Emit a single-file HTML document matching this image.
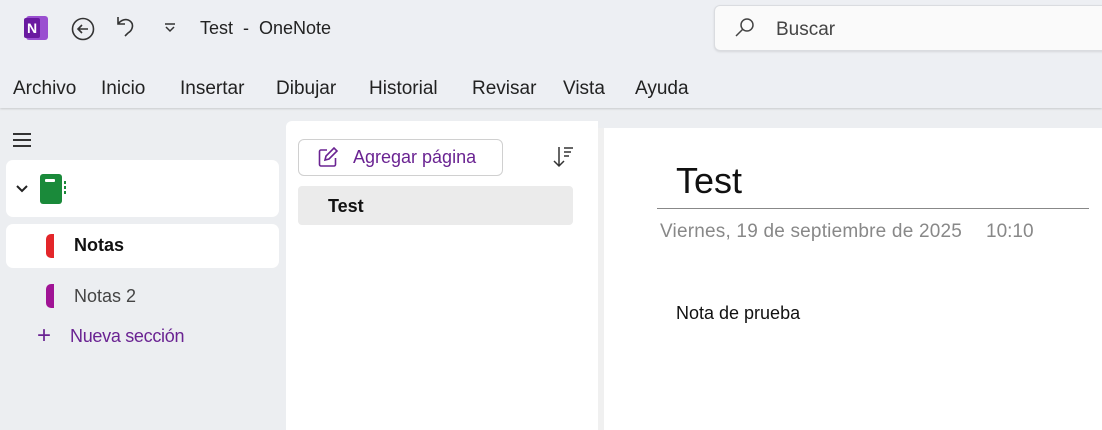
<!DOCTYPE html>
<html><head><meta charset="utf-8"><style>
*{margin:0;padding:0;box-sizing:border-box}
html,body{width:1102px;height:430px;overflow:hidden}
body{background:#eceef1;font-family:"Liberation Sans",sans-serif;position:relative;color:#1f1f1f}
.a{position:absolute}
.menu span{position:absolute;top:78px;font-size:19px;color:#222}
</style></head><body>
<div class="a" style="left:0;top:0;width:1102px;height:108px;background:#edeff3;box-shadow:0 1px 2px rgba(0,0,0,.15)"></div>
<div class="a" style="left:26px;top:16px;width:22px;height:24px;background:#9a4fd0;border-radius:3px"></div>
<div class="a" style="left:24px;top:18px;width:16px;height:20px;background:#6a1aa0;color:#fff;font-weight:bold;font-size:14px;text-align:center;line-height:20px;border-radius:2px">N</div>
<svg class="a" style="left:70px;top:16px" width="26" height="26" viewBox="0 0 26 26"><circle cx="13" cy="13" r="10.5" fill="none" stroke="#333" stroke-width="1.6"/><path d="M18 13H8M12 9l-4 4 4 4" fill="none" stroke="#333" stroke-width="1.6"/></svg>
<svg class="a" style="left:114px;top:14px" width="28" height="28" viewBox="0 0 28 28"><path d="M4 3v7h7M4 10c3-4 8-6 12-3 4 3 3 9-2 12l-3 3" fill="none" stroke="#333" stroke-width="1.6"/></svg>
<svg class="a" style="left:164px;top:22px" width="12" height="12" viewBox="0 0 12 12"><path d="M1 2h10M2 5l4 4 4-4" fill="none" stroke="#333" stroke-width="1.5"/></svg>
<div class="a" style="left:200px;top:18px;font-size:18px;color:#222">Test&nbsp; - &nbsp;OneNote</div>
<div class="a" style="left:714px;top:5px;width:400px;height:46px;background:#fafafa;border:1px solid #dadce0;border-radius:6px;box-shadow:0 1px 2px rgba(0,0,0,.1)"></div>
<svg class="a" style="left:733px;top:16px" width="24" height="24" viewBox="0 0 24 24"><circle cx="14" cy="9" r="6" fill="none" stroke="#444" stroke-width="1.5"/><path d="M10 13l-7 7" stroke="#444" stroke-width="1.5"/></svg>
<div class="a" style="left:776px;top:19px;font-size:19px;color:#444">Buscar</div>
<div class="menu"><span style="left:13px">Archivo</span><span style="left:101px">Inicio</span><span style="left:180px">Insertar</span><span style="left:276px">Dibujar</span><span style="left:369px">Historial</span><span style="left:472px">Revisar</span><span style="left:563px">Vista</span><span style="left:635px">Ayuda</span></div>
<div class="a" style="left:13px;top:133px;width:18px;height:1.5px;background:#333;box-shadow:0 6px 0 #333,0 12px 0 #333"></div>
<div class="a" style="left:6px;top:160px;width:273px;height:57px;background:#fff;border-radius:7px"></div>
<svg class="a" style="left:15px;top:184px" width="14" height="10" viewBox="0 0 14 10"><path d="M2 2l5 5 5-5" fill="none" stroke="#222" stroke-width="2"/></svg>
<div class="a" style="left:40px;top:174px;width:22px;height:30px;background:#1a8a3a;border-radius:3px"></div>
<div class="a" style="left:45px;top:179px;width:10px;height:3px;background:#fff;border-radius:1px"></div>
<div class="a" style="left:64px;top:181px;width:2px;height:3px;background:#1a8a3a;box-shadow:0 5px 0 #1a8a3a,0 10px 0 #1a8a3a"></div>
<div class="a" style="left:6px;top:224px;width:273px;height:44px;background:#fff;border-radius:7px"></div>
<div class="a" style="left:46px;top:234px;width:8px;height:24px;background:#e3262a;border-radius:5px 0 0 5px"></div>
<div class="a" style="left:74px;top:235px;font-size:18px;font-weight:bold;color:#111">Notas</div>
<div class="a" style="left:46px;top:284px;width:8px;height:24px;background:#a01395;border-radius:5px 0 0 5px"></div>
<div class="a" style="left:74px;top:286px;font-size:18px;color:#444">Notas 2</div>
<div class="a" style="left:37px;top:324px;font-size:24px;color:#6a2392;line-height:24px">+</div>
<div class="a" style="left:70px;top:326px;font-size:18px;color:#6a2392;letter-spacing:-0.3px">Nueva sección</div>
<div class="a" style="left:286px;top:121px;width:312px;height:309px;background:#fff;border-radius:6px 0 0 0"></div>
<div class="a" style="left:598px;top:128px;width:6px;height:302px;background:#f0f0f0"></div>
<div class="a" style="left:298px;top:139px;width:205px;height:37px;border:1px solid #d0d0d0;border-radius:6px"></div>
<svg class="a" style="left:317px;top:147px" width="22" height="22" viewBox="0 0 22 22"><path d="M10 3H4a1.5 1.5 0 0 0-1.5 1.5v13A1.5 1.5 0 0 0 4 19h13a1.5 1.5 0 0 0 1.5-1.5V11M8 13l1-4 8-8 3 3-8 8z" fill="none" stroke="#6a2392" stroke-width="1.6"/></svg>
<div class="a" style="left:353px;top:147px;font-size:18px;color:#6a2392">Agregar página</div>
<svg class="a" style="left:552px;top:145px" width="24" height="24" viewBox="0 0 24 24"><path d="M7 2v19M2 16l5 5 5-5M12 3h9M12 7h7M12 11h5" fill="none" stroke="#333" stroke-width="1.5"/></svg>
<div class="a" style="left:298px;top:186px;width:275px;height:39px;background:#ebebeb;border-radius:4px"></div>
<div class="a" style="left:328px;top:196px;font-size:18px;font-weight:bold;color:#111">Test</div>
<div class="a" style="left:604px;top:128px;width:498px;height:302px;background:#fff"></div>
<div class="a" style="left:676px;top:160px;font-size:36px;color:#111">Test</div>
<div class="a" style="left:657px;top:208px;width:432px;height:1px;background:#888"></div>
<div class="a" style="left:660px;top:221px;font-size:19px;color:#888;letter-spacing:0.2px">Viernes, 19 de septiembre de 2025</div>
<div class="a" style="left:986px;top:221px;font-size:19px;color:#888">10:10</div>
<div class="a" style="left:676px;top:303px;font-size:18px;color:#111">Nota de prueba</div>
</body></html>
